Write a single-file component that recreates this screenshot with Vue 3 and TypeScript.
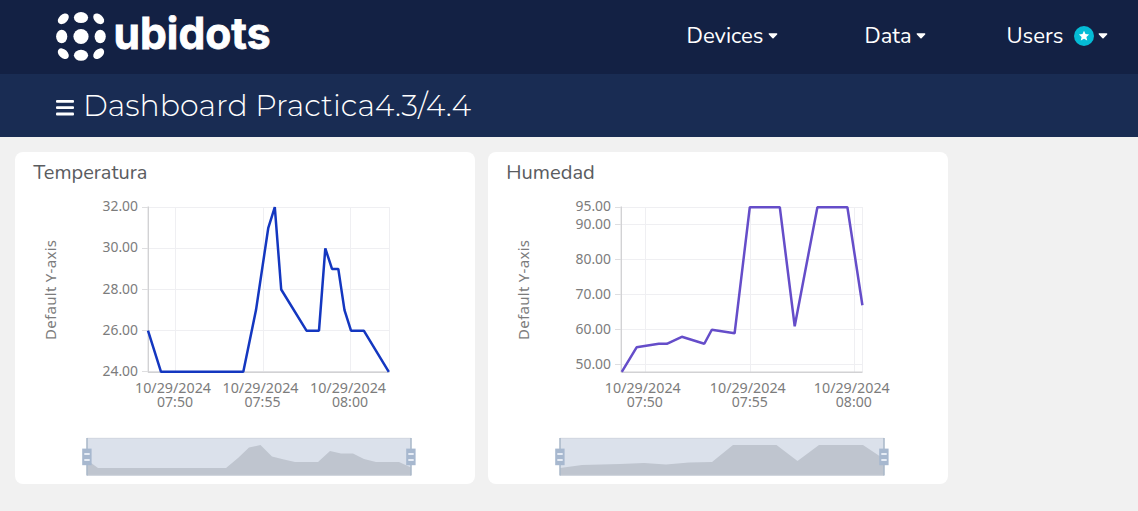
<script setup lang="ts">
interface Tick { x: number; label: string; time: string }
interface Chart {
  title: string
  titleWidth: number
  color: string
  min: number
  max: number
  yTicks: number[]
  xTicks: Tick[]
  points: [number, number][]
  overview: string
}

const top = 55.2
const bottom = 219.8

const charts: Chart[] = [
  {
    title: 'Temperatura', titleWidth: 114, color: '#1437c0', min: 24, max: 32,
    yTicks: [32, 30, 28, 26, 24],
    xTicks: [
      { x: 160.5, label: '10/29/2024', time: '07:50' },
      { x: 248, label: '10/29/2024', time: '07:55' },
      { x: 335.5, label: '10/29/2024', time: '08:00' },
    ],
    points: [[133, 26], [146, 24], [228.3, 24], [241, 27], [253.3, 31], [259.8, 32], [266.2, 28], [291.5, 26], [304, 26], [310.3, 30], [317, 29], [323.3, 29], [329.5, 27], [336, 26], [348.8, 26], [373.8, 24]],
    overview: '72,308 83,316 211,316 223,306 234,295.5 245.5,293 257,304.5 269,307.5 280,310 303,310 315,299 326,301.5 338,301.5 349,307 361,310 384,310 396,315.5',
  },
  {
    title: 'Humedad', titleWidth: 88.5, color: '#654dc9', min: 48, max: 95,
    yTicks: [95, 90, 80, 70, 60, 50],
    xTicks: [
      { x: 157.3, label: '10/29/2024', time: '07:50' },
      { x: 262.3, label: '10/29/2024', time: '07:55' },
      { x: 366.3, label: '10/29/2024', time: '08:00' },
    ],
    points: [[133.8, 48], [148.6, 55], [170.8, 56], [178.8, 56], [193.8, 58], [216.3, 56], [223.8, 60], [246.6, 59], [261.8, 95], [291.8, 95], [306.7, 61], [329.4, 95], [359.4, 95], [374.4, 67]],
    overview: '72,316 94,313 132,312 156,311 178,312.5 201,310.5 224,310 245,293 288.5,293 309.5,309 331,293 375,293 396,307',
  },
]

const yOf = (c: Chart, v: number): number => bottom - ((v - c.min) / (c.max - c.min)) * (bottom - top)
const line = (c: Chart): string => c.points.map(([x, v]) => `${x},${yOf(c, v)}`).join(' ')
const snap = (v: number): number => Math.floor(v) + 0.5

const menu = [
  { label: 'Devices', width: 77, cls: 'devices', badge: false },
  { label: 'Data', width: 47, cls: 'data', badge: false },
  { label: 'Users', width: 57, cls: 'users', badge: true },
]
</script>

<template>
  <div class="page">
    <header class="topbar">
      <svg class="logo" width="220" height="64" viewBox="0 -10 220 64" fill="#fff">
        <ellipse cx="7.3" cy="8.8" rx="6.3" ry="4.3" transform="rotate(-43 7.3 8.8)" />
        <ellipse cx="25" cy="7.6" rx="7.1" ry="5.5" />
        <ellipse cx="42.7" cy="8.8" rx="6.3" ry="4.3" transform="rotate(43 42.7 8.8)" />
        <ellipse cx="5.7" cy="26.5" rx="5.6" ry="6.8" />
        <circle cx="25" cy="26.5" r="7.6" />
        <ellipse cx="44.2" cy="26.5" rx="5.6" ry="6.8" />
        <ellipse cx="7.3" cy="43.7" rx="6.3" ry="4.3" transform="rotate(43 7.3 43.7)" />
        <ellipse cx="25" cy="45.3" rx="7.1" ry="5.5" />
        <ellipse cx="42.7" cy="43.7" rx="6.3" ry="4.3" transform="rotate(-43 42.7 43.7)" />
        <text class="wordmark" x="57.5" y="38.5" textLength="157" lengthAdjust="spacingAndGlyphs">ubidots</text>
      </svg>
      <nav class="menu">
        <a v-for="m in menu" :key="m.label" class="item" :class="m.cls">
          <svg :width="m.width + 2" height="32">
            <text class="menu-text" x="0.5" y="23" :textLength="m.width" lengthAdjust="spacingAndGlyphs">{{ m.label }}</text>
          </svg>
          <svg v-if="m.badge" class="badge" width="20" height="20" viewBox="0 0 20 20">
            <circle cx="10" cy="10" r="10" fill="#05bcd6" />
            <path d="M10 4.8l1.5 3.3 3.6.4-2.7 2.4.8 3.6-3.2-1.8-3.2 1.8.8-3.6-2.7-2.4 3.6-.4z" fill="#fff" />
          </svg>
          <svg class="caret" width="10" height="6" viewBox="0 0 10 6">
            <path d="M1.4.9h7.2L5 4.8z" fill="#fff" stroke="#fff" stroke-width="1.5" stroke-linejoin="round" />
          </svg>
        </a>
      </nav>
    </header>

    <div class="subbar">
      <svg class="burger" width="18" height="16" viewBox="0 0 18 16" fill="#fff">
        <rect y="0" width="18" height="2.8" rx="1" />
        <rect y="6.3" width="18" height="2.8" rx="1" />
        <rect y="12.6" width="18" height="2.8" rx="1" />
      </svg>
      <svg width="400" height="40">
        <text class="heading" x="0" y="30" textLength="388" lengthAdjust="spacingAndGlyphs">Dashboard Practica4.3/4.4</text>
      </svg>
    </div>

    <main class="widgets">
      <section v-for="c in charts" :key="c.title" class="card">
        <svg width="460" height="332" viewBox="0 0 460 332">
          <text class="card-title" x="18.3" y="27.3" :textLength="c.titleWidth" lengthAdjust="spacingAndGlyphs">{{ c.title }}</text>
          <text class="tick" transform="translate(41.3 188) rotate(-90)" textLength="100" lengthAdjust="spacing">Default Y-axis</text>

          <g class="grid">
            <line v-for="v in c.yTicks" :key="v" x1="133" x2="374" :y1="snap(yOf(c, v))" :y2="snap(yOf(c, v))" />
            <line v-for="t in c.xTicks" :key="t.time" :x1="snap(t.x)" :x2="snap(t.x)" y1="55" y2="220" />
            <line x1="374.5" x2="374.5" y1="55" y2="220" />
          </g>
          <g class="axis">
            <line x1="133.3" x2="133.3" y1="54.5" y2="220.5" />
            <line x1="133" x2="374.5" y1="220.3" y2="220.3" />
          </g>
          <g class="notch">
            <line v-for="v in c.yTicks" :key="v" x1="127" x2="133" :y1="snap(yOf(c, v))" :y2="snap(yOf(c, v))" />
          </g>
          <text
            v-for="v in c.yTicks" :key="v" class="tick" x="87.5" :y="yOf(c, v) + 4"
            textLength="35.5" lengthAdjust="spacingAndGlyphs"
          >{{ v.toFixed(2) }}</text>
          <g v-for="t in c.xTicks" :key="t.time">
            <text class="tick" :x="t.x - 40.5" y="240.5" textLength="76" lengthAdjust="spacingAndGlyphs">{{ t.label }}</text>
            <text class="tick" :x="t.x - 18.5" y="254.5" textLength="36" lengthAdjust="spacingAndGlyphs">{{ t.time }}</text>
          </g>
          <polyline :points="line(c)" fill="none" :stroke="c.color" stroke-width="2.5" stroke-linejoin="bevel" />

          <rect x="72" y="286" width="324" height="37.5" fill="#dbe1eb" />
          <polygon :points="`72,323.5 ${c.overview} 396,323.5`" fill="#bfc5cf" />
          <path d="M72 286.3H396M72 323.3H396" stroke="#ced3dc" stroke-width=".8" />
          <g v-for="x in [72, 396]" :key="x" :transform="`translate(${x} 0)`">
            <line y1="286" y2="323.5" stroke="#a9b7c9" stroke-width="1.5" />
            <rect x="-4.8" y="296.6" width="9.4" height="16.6" fill="#a7b8cf" />
            <path d="M-2.7 302h5.4M-2.7 308h5.4" stroke="#e6ecf5" stroke-width="1.8" />
          </g>
        </svg>
      </section>
    </main>
  </div>
</template>

<style>
body { margin: 0; background: #f1f1f1; }
</style>

<style scoped>
.page { width: 1138px; height: 511px; overflow: hidden; background: #f1f1f1; }
svg { display: block; flex: none; }
.topbar { height: 74px; background: #132144; display: flex; box-sizing: border-box; padding: 0 30px 0 56px; justify-content: space-between; }
.wordmark { font: 700 43.5px Inter, sans-serif; stroke: #fff; stroke-width: .8; }
.menu { display: flex; height: 52px; align-items: center; margin-top: 10px; }
.item { display: flex; align-items: center; }
.devices { margin-right: 86px; }
.data { margin-right: 80px; }
.menu-text { font: 375 22.5px Nunito, "Open Sans", sans-serif; fill: #fff; }
.caret { margin-left: 3px; }
.badge { margin-left: 9px; }
.badge + .caret { margin-left: 4px; }
.subbar { height: 63px; background: #192c53; display: flex; align-items: center; padding-left: 56px; gap: 9px; }
.burger { margin-top: 4px; }
.heading { font: 300 30px Montserrat, Inter, sans-serif; fill: #fff; }
.widgets { display: flex; gap: 13px; padding: 15px 0 0 15px; }
.card { width: 460px; height: 332px; background: #fff; border-radius: 8px; }
.card-title { font: 375 19.5px Nunito, "Open Sans", sans-serif; fill: #5a5c5f; }
.tick { font: 400 15px "Noto Sans", "Open Sans", sans-serif; fill: #7c7c7c; }
.grid line { stroke: #efeff2; stroke-width: 1; }
.axis line { stroke: #d2d2d4; stroke-width: 1.4; }
.notch line { stroke: #dedee0; stroke-width: 1; }
</style>
